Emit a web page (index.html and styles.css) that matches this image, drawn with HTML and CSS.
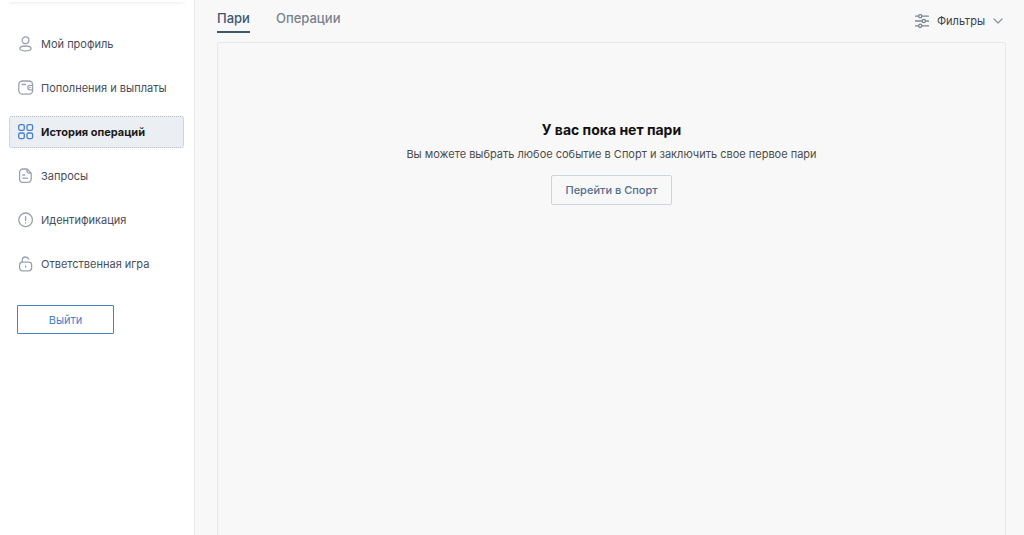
FILE: index.html
```html
<!DOCTYPE html>
<html lang="ru">
<head>
    <meta charset="UTF-8">
    <meta name="viewport" content="width=device-width, initial-scale=1.0">
    <title>История операций</title>
    <link rel="stylesheet" href="styles.css">
</head>
<body>
    <aside class="sidebar">
        <div class="sidebar-card"></div>
        <nav class="menu">
            <a class="menu-item" href="#">
                <svg class="icon" viewBox="0 0 16 16"><circle cx="7.5" cy="4.3" r="3.4"/><ellipse cx="7.5" cy="12.4" rx="5.6" ry="2.4"/></svg>
                Мой профиль
            </a>
            <a class="menu-item" href="#">
                <svg class="icon" viewBox="0 0 16 16"><rect x="0.8" y="1" width="13.8" height="13.2" rx="3.6"/><path d="M4 4.5h3.4M14.6 5.4h-2.6a2.2 2.2 0 0 0 0 4.4h2.6M11.8 7.6h.6"/></svg>
                Пополнения и выплаты
            </a>
            <a class="menu-item active" href="#" aria-current="page">
                <svg class="icon" viewBox="0 0 16 16"><rect x="0.7" y="0.7" width="5.6" height="5.6" rx="1.6"/><rect x="9" y="0.7" width="5.6" height="5.6" rx="1.6"/><rect x="0.7" y="9" width="5.6" height="5.6" rx="1.6"/><rect x="9" y="9" width="5.6" height="5.6" rx="1.6"/></svg>
                История операций
            </a>
            <a class="menu-item" href="#">
                <svg class="icon" viewBox="0 0 16 16"><path d="M9 1H4.8a3.2 3.2 0 0 0-3.2 3.2v7a3.2 3.2 0 0 0 3.2 3.2h5.2a3.2 3.2 0 0 0 3.2-3.2V5.2zM9 1v2.2a2 2 0 0 0 2 2h2.2M4.8 7h2M4.8 10.2h4.8"/></svg>
                Запросы
            </a>
            <a class="menu-item" href="#">
                <svg class="icon" viewBox="0 0 16 16"><circle cx="7.6" cy="7.8" r="6.8"/><path d="M7.6 4.6v3.8M7.6 10.6v.3"/></svg>
                Идентификация
            </a>
            <a class="menu-item" href="#">
                <svg class="icon" viewBox="0 0 16 16"><rect x="1.6" y="6.2" width="12" height="8.6" rx="2.8"/><path d="M4.2 6.2V4.4A3.4 3.4 0 0 1 7.6 1a3.4 3.4 0 0 1 3.2 2.2M7.6 9.8v1.2"/></svg>
                Ответственная игра
            </a>
        </nav>
        <button class="logout" type="button">Выйти</button>
    </aside>

    <main class="content">
        <header class="toolbar">
            <nav class="tabs">
                <a class="tab active" href="#" aria-current="page">Пари</a>
                <a class="tab" href="#">Операции</a>
            </nav>
            <button class="filters" type="button">
                <svg class="icon-filters" viewBox="0 0 14 14"><path d="M0.5 2.2h2.9M7 2.2h6.5M0.5 7h6.6M10.6 7h2.9M0.5 11.8h2.9M7 11.8h6.5"/><circle cx="5.2" cy="2.2" r="1.6"/><circle cx="8.8" cy="7" r="1.6"/><circle cx="5.2" cy="11.8" r="1.6"/></svg>
                Фильтры
                <svg class="icon-arrow" viewBox="0 0 10 10"><path d="M1 3l4 4 4-4"/></svg>
            </button>
        </header>

        <section class="panel">
            <h1 class="panel-title">У вас пока нет пари</h1>
            <p class="panel-text">Вы можете выбрать любое событие в Спорт и заключить свое первое пари</p>
            <a class="panel-button" href="#">Перейти в Спорт</a>
        </section>
    </main>
</body>
</html>
```

FILE: styles.css
```css
:root {
    --bg: #f8f8f8;
    --surface: #ffffff;
    --border: #e6e8ec;
    --text: #484d5b;
    --muted: #9aa2b1;
    --accent: #4680cb;
    --navy: #3f566f;
}

* {
    box-sizing: border-box;
    margin: 0;
    padding: 0;
}

body {
    display: flex;
    min-height: 100vh;
    font-family: 'Inter', 'Liberation Sans', sans-serif;
    font-size: 11px;
    line-height: 16px;
    background: var(--bg);
    color: var(--text);
}

a {
    color: inherit;
    text-decoration: none;
}

button {
    font: inherit;
    cursor: pointer;
}

svg {
    flex: none;
    fill: none;
    stroke: currentColor;
    stroke-width: 1.3;
    stroke-linecap: round;
    stroke-linejoin: round;
}

/* Sidebar */
.sidebar {
    flex: none;
    width: 195px;
    padding: 0 10px 24px 9px;
    background: var(--surface);
    border-right: 1px solid var(--border);
}

.sidebar-card {
    height: 2px;
    border-radius: 0 0 4px 4px;
    box-shadow: 0 1px 3px rgba(0, 0, 0, 0.1);
}

.menu {
    display: flex;
    flex-direction: column;
    gap: 12px;
    margin-top: 26px;
}

.menu-item {
    display: flex;
    align-items: center;
    gap: 7px;
    height: 32px;
    padding: 0 8px;
    border: 1px solid transparent;
    border-radius: 3px;
}

.menu-item.active {
    background: #ebeff4;
    border: 1px dotted #b4bcc9;
    color: #1a1a1a;
    font-weight: 700;
}

.icon {
    width: 16px;
    height: 16px;
    color: var(--muted);
}

.active .icon {
    color: var(--accent);
}

.logout {
    width: 97px;
    height: 29px;
    margin: 25px 0 0 8px;
    background: var(--surface);
    border: 1px solid var(--accent);
    border-radius: 1px;
    color: var(--accent);
}

/* Content */
.content {
    flex: 1;
    display: flex;
    flex-direction: column;
    padding: 0 18px 0 22px;
}

.toolbar {
    display: flex;
    justify-content: space-between;
    align-items: flex-start;
    height: 42px;
}

.tabs {
    display: flex;
    gap: 26px;
    padding-top: 10px;
}

.tab {
    padding-bottom: 5px;
    border-bottom: 2px solid transparent;
    color: #7b818d;
    font-size: 13px;
    font-weight: 500;
}

.tab.active {
    border-color: var(--navy);
    color: var(--navy);
}

.filters {
    display: flex;
    align-items: center;
    gap: 8px;
    padding: 13px 3px 0;
    background: none;
    border: none;
    color: #3b414d;
}

.icon-filters {
    width: 14px;
    height: 14px;
    color: #7b8692;
}

.icon-arrow {
    width: 10px;
    height: 10px;
    color: #8c94a1;
}

.panel {
    flex: 1;
    display: flex;
    flex-direction: column;
    align-items: center;
    padding: 76px 16px 0;
    border: 1px solid var(--border);
    border-bottom: none;
    border-radius: 3px 3px 0 0;
    text-align: center;
}

.panel-title {
    color: #111111;
    font-size: 14px;
    font-weight: 700;
    line-height: 22px;
}

.panel-text {
    margin-top: 5px;
    color: #4c4c4c;
}

.panel-button {
    margin-top: 13px;
    padding: 6px 13px;
    border: 1px solid #ccd4de;
    border-radius: 2px;
    color: #506d92;
    font-weight: 500;
}
```
